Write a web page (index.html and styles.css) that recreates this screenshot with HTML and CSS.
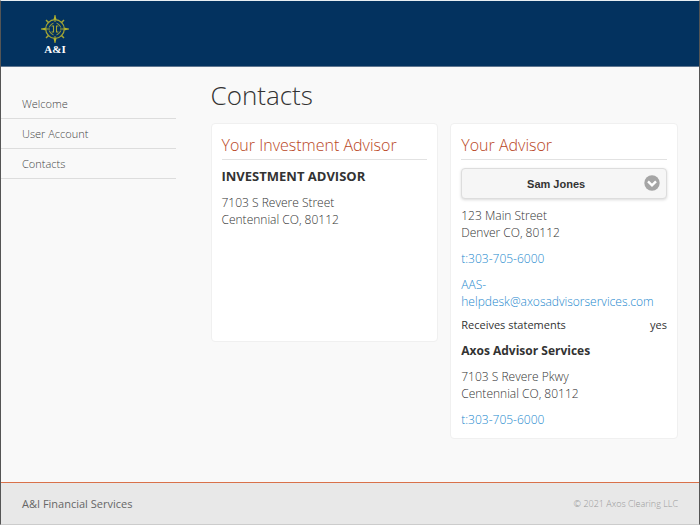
FILE: index.html
```html
<!DOCTYPE html>
<html lang="en">
<head>
    <meta charset="UTF-8">
    <meta name="viewport" content="width=device-width, initial-scale=1.0">
    <title>Contacts</title>
    <link rel="stylesheet" href="styles.css">
</head>
<body>
    <header class="header">
        <a class="logo" href="#" aria-label="A&amp;I home">
            <svg class="compass" viewBox="0 0 28 28" fill="none" stroke="#a3a535" aria-hidden="true">
                <circle cx="14" cy="14" r="9.3" stroke-width="1.2"/>
                <path d="M12.5 8.2a6 6 0 0 0-4.3 4.3M8.2 15.5a6 6 0 0 0 4.3 4.3M15.5 8.2a6 6 0 0 1 4.3 4.3M19.8 15.5a6 6 0 0 1-4.3 4.3" stroke-width="1"/>
                <path d="M14 0v7M14 21v7M0 14h9M19 14h9" stroke-width="1"/>
                <path d="M5 5l3 3M23 5l-3 3M5 23l3-3M23 23l-3-3" stroke-width="1.5"/>
                <path d="M10.5 11h2v6h-2M17.5 11h-2v6h2" stroke-width="1.1"/>
                <path d="M14 0l1.6 4.5h-3.2zM14 28l1.6-4.5h-3.2zM0 14l4.5-1.6v3.2zM28 14l-4.5-1.6v3.2z" fill="#b5b32c" stroke="none"/>
            </svg>
            <span class="logo-text">A&amp;I</span>
        </a>
    </header>

    <div class="page">
        <nav class="menu">
            <a href="#">Welcome</a>
            <a href="#">User Account</a>
            <a href="#">Contacts</a>
        </nav>

        <main class="content">
            <h1>Contacts</h1>
            <div class="cards">
                <section class="card">
                    <h2>Your Investment Advisor</h2>
                    <h3>INVESTMENT ADVISOR</h3>
                    <p>7103 S Revere Street<br>Centennial CO, 80112</p>
                </section>

                <section class="card">
                    <h2>Your Advisor</h2>
                    <div class="picker">
                        <select id="advisor" aria-label="Advisor">
                            <option>Sam Jones</option>
                        </select>
                        <svg class="arrow" viewBox="0 0 16 16" aria-hidden="true">
                            <circle cx="8" cy="8" r="7.7" fill="#a5a5a5"/>
                            <path d="M4 6.3l4 4 4-4" fill="none" stroke="#fff" stroke-width="2.4"/>
                        </svg>
                    </div>
                    <p>123 Main Street<br>Denver CO, 80112</p>
                    <p><a href="tel:303-705-6000">t:303-705-6000</a></p>
                    <p><a href="mailto:AAS-helpdesk@axosadvisorservices.com">AAS-helpdesk@axosadvisorservices.com</a></p>
                    <div class="statements">
                        <span>Receives statements</span>
                        <span>yes</span>
                    </div>
                    <h4>Axos Advisor Services</h4>
                    <p>7103 S Revere Pkwy<br>Centennial CO, 80112</p>
                    <p><a href="tel:303-705-6000">t:303-705-6000</a></p>
                </section>
            </div>
        </main>
    </div>

    <footer class="footer">
        <span>A&amp;I Financial Services</span>
        <span class="copyright">© 2021 Axos Clearing LLC</span>
    </footer>
</body>
</html>
```

FILE: styles.css
```css
* {
    box-sizing: border-box;
}
body {
    display: flex;
    flex-direction: column;
    min-height: 100vh;
    margin: 0;
    border: 1px solid #555;
    border-top-color: #e8eef2;
    border-bottom-color: #ccc;
    background-color: #f9f9f9;
    color: #333;
    font-family: "Open Sans", sans-serif;
    font-size: 12px;
    line-height: 17px;
}
h1, h2, h3, h4, p {
    margin: 0;
}
.header {
    padding: 14px 40px 11px;
    border-bottom: 1px solid #5f7690;
    background-color: #03325f;
}
.logo {
    display: flex;
    flex-direction: column;
    align-items: center;
    width: 28px;
    color: #fff;
    text-decoration: none;
}
.compass {
    width: 28px;
    height: 28px;
}
.logo-text {
    font-family: "Liberation Serif", serif;
    font-size: 11px;
    font-weight: bold;
    line-height: 12px;
}
.page {
    display: flex;
    flex: 1;
}
.menu {
    flex: 0 0 25%;
    padding-top: 22px;
}
.menu a {
    display: block;
    padding: 6px 21px;
    border-bottom: 1px solid #ddd;
    color: #444;
    font-size: 11px;
    font-weight: 300;
    line-height: 17px;
    text-decoration: none;
}
.content {
    flex: 1;
    padding: 9px 21px 40px 35px;
}
h1 {
    margin-bottom: 9px;
    font-size: 26px;
    font-weight: 300;
    line-height: 38px;
}
.cards {
    display: grid;
    grid-template-columns: 1fr 1fr;
    align-items: start;
    gap: 12px;
}
.card {
    min-width: 0;
    min-height: 219px;
    padding: 10px;
    border: 1px solid #f0f0f0;
    border-radius: 4px;
    background-color: #fff;
}
.card h2 {
    margin-bottom: 8px;
    padding-bottom: 3px;
    border-bottom: 1px solid #e2e2e2;
    color: #b9461d;
    font-size: 16px;
    font-weight: 300;
    line-height: 22px;
}
.card h3, .card h4 {
    margin-bottom: 9px;
    font-size: 13px;
    font-weight: bold;
    line-height: 17px;
}
.card h4 {
    font-size: 12px;
}
.card p {
    margin-bottom: 9px;
    font-weight: 300;
}
.card p:last-child {
    margin-bottom: 0;
}
.card p a {
    color: #2489ce;
    text-decoration: none;
}
.picker {
    position: relative;
    margin-bottom: 8px;
}
.picker select {
    display: block;
    width: 100%;
    height: 31px;
    padding: 0 24px 0 8px;
    border: 1px solid #ddd;
    border-radius: 4px;
    background-color: #f6f6f6;
    box-shadow: 0 1px 3px rgba(0, 0, 0, 0.15);
    color: #333;
    font-family: "Liberation Sans", Arial, sans-serif;
    font-size: 11px;
    font-weight: bold;
    text-align: center;
    text-align-last: center;
    appearance: none;
}
.arrow {
    position: absolute;
    top: 7px;
    right: 7px;
    width: 16px;
    height: 16px;
    pointer-events: none;
}
.statements {
    display: flex;
    justify-content: space-between;
    margin-bottom: 11px;
    font-size: 11px;
    line-height: 12px;
}
.footer {
    display: flex;
    justify-content: space-between;
    align-items: center;
    padding: 12px 21px;
    border-top: 1px solid #d9714a;
    background-color: #e8e8e8;
    color: #666;
    font-size: 11px;
}
.copyright {
    color: #999;
    font-size: 9px;
    font-weight: 300;
}
```
